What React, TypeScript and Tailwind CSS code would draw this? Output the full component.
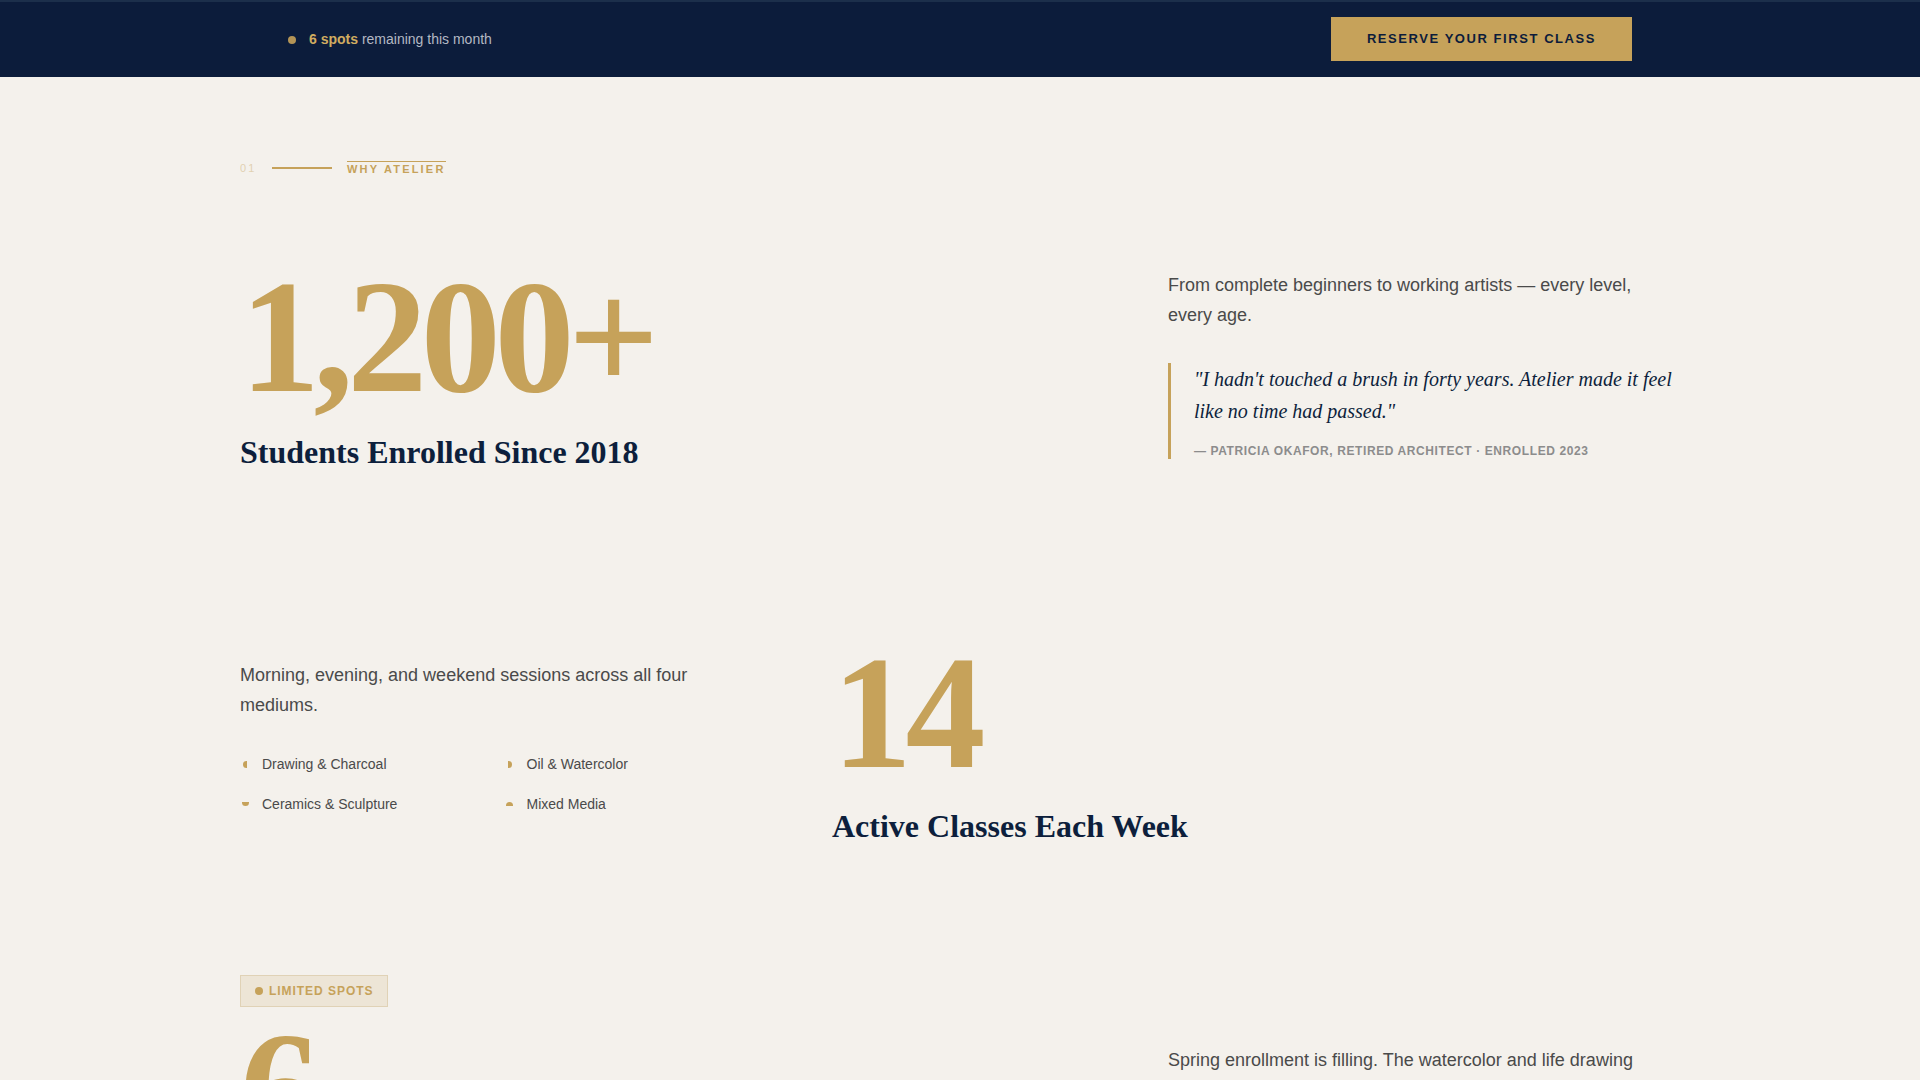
import React from "react";

const serif = { fontFamily: '"Liberation Serif", "Times New Roman", serif' };

function Bullet({ kind }: { kind: "l" | "r" | "b" | "t" }) {
  const cls =
    kind === "l"
      ? "w-[4px] h-[7px] rounded-l-full"
      : kind === "r"
      ? "w-[4px] h-[7px] rounded-r-full"
      : kind === "b"
      ? "w-[7px] h-[4px] rounded-b-full"
      : "w-[7px] h-[4px] rounded-t-full";
  return (
    <span className="w-[10px] flex items-center justify-center shrink-0">
      <span className={`${cls} bg-[#c6a25a] block`} />
    </span>
  );
}

export default function App() {
  return (
    <div
      className="min-h-screen bg-[#f4f1ec] text-[#4a4a4a]"
      style={{ fontFamily: '"Liberation Sans", Arial, sans-serif' }}
    >
      {/* Top bar */}
      <div className="h-[77px] bg-[#0c1c3b] border-t-2 border-[#1c2f4b]">
        <div className="max-w-[1440px] mx-auto px-12 h-full flex items-center justify-between">
          <div className="flex items-center gap-[13px] text-[14px]">
            <span className="w-2 h-2 rounded-full bg-[#c6a25a] opacity-90" />
            <span className="text-[#b3b8c3]">
              <span className="font-bold text-[#d1ac60]">6 spots</span> remaining this month
            </span>
          </div>
          <button className="h-[44px] -mt-[1px] px-[36px] bg-[#c6a25a] text-[#0c1c3b] text-[13px] font-bold tracking-[0.12em] uppercase">
            Reserve Your First Class
          </button>
        </div>
      </div>

      <main className="max-w-[1440px] mx-auto pt-[81px] pb-24">
        {/* Label */}
        <div className="flex items-center h-5 text-[11px]">
          <span className="text-[#c6a25a] opacity-40 tracking-[0.2em] w-[32px]">01</span>
          <span className="w-[60px] h-[2px] bg-[#c6a25a]" />
          <span className="ml-[15px] font-bold uppercase tracking-[0.2em] text-[#c6a25a] border-t border-[#c6a25a] leading-[12px] pt-[1px]">
            Why Atelier
          </span>
        </div>

        {/* Row 1 */}
        <div className="mt-[79px] grid grid-cols-[1fr_512px] items-center">
          <div>
            <div
              className="text-[160px] leading-none font-bold text-[#c6a25a] tracking-[-0.04em]"
              style={serif}
            >
              1,200+
            </div>
            <h2 className="mt-4 text-[32px] leading-[1.2] font-bold text-[#0d1f3c]" style={serif}>
              Students Enrolled Since 2018
            </h2>
          </div>
          <div>
            <p className="text-[18px] leading-[1.7] max-w-[480px]">
              From complete beginners to working artists — every level, every age.
            </p>
            <blockquote className="mt-8 border-l-[3px] border-[#c6a25a] pl-[23px]">
              <p className="text-[20px] leading-[1.6] italic text-[#0d1f3c]" style={serif}>
                "I hadn't touched a brush in forty years. Atelier made it feel like no time had passed."
              </p>
              <p className="mt-4 text-[12px] leading-4 font-bold uppercase tracking-[0.05em] text-[#8c8c8c]">
                — Patricia Okafor, Retired Architect · Enrolled 2023
              </p>
            </blockquote>
          </div>
        </div>

        {/* Row 2 */}
        <div className="mt-[162px] flex items-center">
          <div className="w-[592px] shrink-0 pb-[4px]">
            <p className="text-[18px] leading-[29.5px] max-w-[500px]">
              Morning, evening, and weekend sessions across all four mediums.
            </p>
            <ul className="mt-[34px] grid grid-cols-2 gap-x-[29px] gap-y-[20px] max-w-[500px] text-[14px]">
              <li className="flex items-center gap-[12px] h-5">
                <Bullet kind="l" />
                Drawing &amp; Charcoal
              </li>
              <li className="flex items-center gap-[12px] h-5">
                <Bullet kind="r" />
                Oil &amp; Watercolor
              </li>
              <li className="flex items-center gap-[12px] h-5">
                <Bullet kind="b" />
                Ceramics &amp; Sculpture
              </li>
              <li className="flex items-center gap-[12px] h-5">
                <Bullet kind="t" />
                Mixed Media
              </li>
            </ul>
          </div>
          <div>
            <div
              className="text-[160px] leading-none font-bold text-[#c6a25a] tracking-[-0.04em]"
              style={serif}
            >
              14
            </div>
            <h2 className="mt-[14px] text-[32px] leading-[1.2] font-bold text-[#0d1f3c]" style={serif}>
              Active Classes Each Week
            </h2>
          </div>
        </div>

        {/* Row 3 */}
        <div className="mt-[129px] grid grid-cols-[1fr_512px] items-center">
          <div>
            <span className="inline-flex items-center gap-[6px] h-8 px-[14px] bg-[#ede5d6] border border-[#e0d2b6] text-[12px] font-bold uppercase tracking-[0.08em] text-[#c6a25a]">
              <span className="w-2 h-2 rounded-full bg-[#c6a25a]" />
              Limited Spots
            </span>
            <div
              className="mt-px text-[160px] leading-none font-bold text-[#c6a25a] tracking-[-0.04em]"
              style={serif}
            >
              6
            </div>
            <h2 className="mt-4 text-[32px] leading-[1.2] font-bold text-[#0d1f3c]" style={serif}>
              Spots Left for Spring Term
            </h2>
          </div>
          <div>
            <p className="text-[18px] leading-[1.7] max-w-[480px]">
              Spring enrollment is filling. The watercolor and life drawing intensives are nearly full.
            </p>
            <a className="mt-6 inline-flex items-center h-[22px] text-[13px] font-bold uppercase tracking-[0.12em] text-[#0c1c3b] border-b-2 border-[#c6a25a]">
              View the Spring Schedule →
            </a>
          </div>
        </div>
      </main>
    </div>
  );
}
